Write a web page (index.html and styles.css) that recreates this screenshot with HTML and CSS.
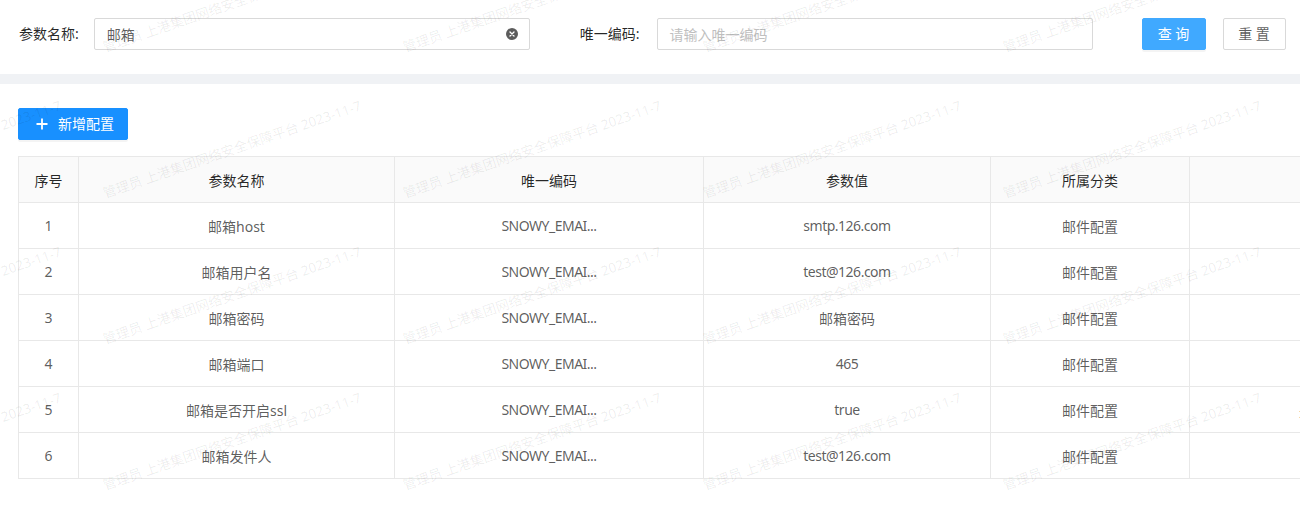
FILE: index.html
```html
<!DOCTYPE html>
<html lang="zh-CN">
<head>
<meta charset="utf-8">
<title>系统配置</title>
<link rel="stylesheet" href="styles.css">
</head>
<body>
<div class="page">
  <div class="search">
    <div class="field">
      <span class="label">参数名称:</span>
      <div class="input">
        <span class="value">邮箱</span>
        <svg class="clear" width="12" height="12" viewBox="0 0 12 12"><circle cx="6" cy="6" r="6" fill="#5c5c5c"/><path d="M4 4L8 8M8 4L4 8" stroke="#fff" stroke-width="1.3" stroke-linecap="round"/></svg>
      </div>
    </div>
    <div class="field field-2">
      <span class="label">唯一编码:</span>
      <div class="input">
        <span class="placeholder">请输入唯一编码</span>
      </div>
    </div>
    <div class="actions">
      <button class="btn btn-query">查 询</button>
      <button class="btn btn-reset">重 置</button>
    </div>
  </div>
  <div class="divider"></div>
  <div class="card">
    <button class="btn btn-add"><svg class="plus" width="12" height="12" viewBox="0 0 12 12"><path d="M6 0.5V11.5M0.5 6H11.5" stroke="#fff" stroke-width="1.8"/></svg><span>新增配置</span></button>
    <div class="table-wrap">
      <table class="grid">
        <colgroup>
          <col class="c1"><col class="c2"><col class="c3"><col class="c4"><col class="c5"><col class="c6"><col class="c7">
        </colgroup>
        <thead>
          <tr><th>序号</th><th>参数名称</th><th>唯一编码</th><th>参数值</th><th>所属分类</th><th>备注</th><th>操作</th></tr>
        </thead>
        <tbody>
          <tr><td>1</td><td>邮箱host</td><td class="latin">SNOWY_EMAI...</td><td class="latin">smtp.126.com</td><td>邮件配置</td><td></td><td>编辑</td></tr>
          <tr><td>2</td><td>邮箱用户名</td><td class="latin">SNOWY_EMAI...</td><td class="latin">test@126.com</td><td>邮件配置</td><td></td><td>编辑</td></tr>
          <tr><td>3</td><td>邮箱密码</td><td class="latin">SNOWY_EMAI...</td><td>邮箱密码</td><td>邮件配置</td><td></td><td>编辑</td></tr>
          <tr><td>4</td><td>邮箱端口</td><td class="latin">SNOWY_EMAI...</td><td class="latin">465</td><td>邮件配置</td><td></td><td>编辑</td></tr>
          <tr><td>5</td><td>邮箱是否开启ssl</td><td class="latin">SNOWY_EMAI...</td><td class="latin">true</td><td>邮件配置</td><td>是否开启ssl</td><td>编辑</td></tr>
          <tr><td>6</td><td>邮箱发件人</td><td class="latin">SNOWY_EMAI...</td><td class="latin">test@126.com</td><td>邮件配置</td><td></td><td>编辑</td></tr>
        </tbody>
      </table>
    </div>
  </div>
  <div class="watermark" aria-hidden="true">
    <div class="wm-grid">
      <div class="wm-cell"><span>管理员 上港集团网络安全保障平台 2023-11-7</span></div>
      <div class="wm-cell"><span>管理员 上港集团网络安全保障平台 2023-11-7</span></div>
      <div class="wm-cell"><span>管理员 上港集团网络安全保障平台 2023-11-7</span></div>
      <div class="wm-cell"><span>管理员 上港集团网络安全保障平台 2023-11-7</span></div>
      <div class="wm-cell"><span>管理员 上港集团网络安全保障平台 2023-11-7</span></div>
      <div class="wm-cell"><span>管理员 上港集团网络安全保障平台 2023-11-7</span></div>
      <div class="wm-cell"><span>管理员 上港集团网络安全保障平台 2023-11-7</span></div>
      <div class="wm-cell"><span>管理员 上港集团网络安全保障平台 2023-11-7</span></div>
      <div class="wm-cell"><span>管理员 上港集团网络安全保障平台 2023-11-7</span></div>
      <div class="wm-cell"><span>管理员 上港集团网络安全保障平台 2023-11-7</span></div>
      <div class="wm-cell"><span>管理员 上港集团网络安全保障平台 2023-11-7</span></div>
      <div class="wm-cell"><span>管理员 上港集团网络安全保障平台 2023-11-7</span></div>
      <div class="wm-cell"><span>管理员 上港集团网络安全保障平台 2023-11-7</span></div>
      <div class="wm-cell"><span>管理员 上港集团网络安全保障平台 2023-11-7</span></div>
      <div class="wm-cell"><span>管理员 上港集团网络安全保障平台 2023-11-7</span></div>
      <div class="wm-cell"><span>管理员 上港集团网络安全保障平台 2023-11-7</span></div>
      <div class="wm-cell"><span>管理员 上港集团网络安全保障平台 2023-11-7</span></div>
      <div class="wm-cell"><span>管理员 上港集团网络安全保障平台 2023-11-7</span></div>
      <div class="wm-cell"><span>管理员 上港集团网络安全保障平台 2023-11-7</span></div>
      <div class="wm-cell"><span>管理员 上港集团网络安全保障平台 2023-11-7</span></div>
      <div class="wm-cell"><span>管理员 上港集团网络安全保障平台 2023-11-7</span></div>
      <div class="wm-cell"><span>管理员 上港集团网络安全保障平台 2023-11-7</span></div>
      <div class="wm-cell"><span>管理员 上港集团网络安全保障平台 2023-11-7</span></div>
      <div class="wm-cell"><span>管理员 上港集团网络安全保障平台 2023-11-7</span></div>
      <div class="wm-cell"><span>管理员 上港集团网络安全保障平台 2023-11-7</span></div>
      <div class="wm-cell"><span>管理员 上港集团网络安全保障平台 2023-11-7</span></div>
      <div class="wm-cell"><span>管理员 上港集团网络安全保障平台 2023-11-7</span></div>
      <div class="wm-cell"><span>管理员 上港集团网络安全保障平台 2023-11-7</span></div>
      <div class="wm-cell"><span>管理员 上港集团网络安全保障平台 2023-11-7</span></div>
      <div class="wm-cell"><span>管理员 上港集团网络安全保障平台 2023-11-7</span></div>
    </div>
  </div>
</div>
</body>
</html>
```
FILE: styles.css
```css
* { box-sizing: border-box; }
html, body {
  margin: 0;
  padding: 0;
  background: #fff;
  overflow: hidden;
}
body {
  font-family: "Noto Sans", "Noto Sans CJK SC", sans-serif;
  font-size: 14px;
  color: rgba(0, 0, 0, 0.65);
}
.page {
  position: relative;
  width: 1300px;
  height: 513px;
  overflow: hidden;
}
.search {
  display: flex;
  align-items: center;
  height: 74px;
  padding: 0 0 6px 19px;
}
.field {
  display: flex;
  align-items: center;
}
.field-2 { margin-left: 50px; }
.label {
  color: rgba(0, 0, 0, 0.85);
  margin-right: 15px;
  line-height: 22px;
}
.field-2 .label { margin-right: 17px; }
.input {
  width: 436px;
  height: 32px;
  border: 1px solid #d9d9d9;
  border-radius: 2px;
  display: flex;
  align-items: center;
  padding: 0 12px;
  justify-content: space-between;
}
.value { color: rgba(0, 0, 0, 0.65); }
.placeholder { color: #bfbfbf; }
.clear { margin-right: -1px; }
.actions {
  display: flex;
  margin-left: 49px;
  gap: 17px;
}
.btn {
  font-family: inherit;
  font-size: 14px;
  height: 32px;
  border-radius: 2px;
  padding: 0;
  border: 1px solid #d9d9d9;
  background: #fff;
  color: rgba(0, 0, 0, 0.65);
  line-height: 30px;
  white-space: nowrap;
  cursor: pointer;
}
.btn-query {
  width: 64px;
  background: #40a9ff;
  border-color: #40a9ff;
  color: #fff;
  box-shadow: 0 2px 0 rgba(0, 0, 0, 0.045);
}
.btn-reset { width: 63px; }
.divider {
  height: 10px;
  background: #f0f2f5;
}
.card {
  padding: 24px 0 0 18px;
}
.btn-add {
  display: flex;
  align-items: center;
  width: 110px;
  padding: 0 0 0 17px;
  background: #1890ff;
  border-color: #1890ff;
  color: #fff;
  box-shadow: 0 2px 0 rgba(0, 0, 0, 0.045);
}
.btn-add .plus { margin-right: 10px; }
.table-wrap {
  margin-top: 16px;
  width: 1500px;
}
.grid {
  border-collapse: collapse;
  table-layout: fixed;
  width: 1463px;
}
.c1 { width: 60px; }
.c2 { width: 316px; }
.c3 { width: 309px; }
.c4 { width: 287px; }
.c5 { width: 199px; }
.c6 { width: 292px; }
.c7 { width: 200px; }
.grid th, .grid td {
  border: 1px solid #e8e8e8;
  height: 46px;
  padding: 0 8px;
  text-align: center;
  white-space: nowrap;
  overflow: hidden;
  font-weight: normal;
}
.grid th {
  background: #fafafa;
  color: rgba(0, 0, 0, 0.85);
}
.grid td {
  color: rgba(0, 0, 0, 0.65);
}
.grid td.latin {
  letter-spacing: -0.5px;
}
.watermark {
  position: absolute;
  inset: 0;
  pointer-events: none;
  overflow: hidden;
  z-index: 5;
}
.wm-grid {
  position: absolute;
  left: -199px;
  top: -97px;
  width: 1800px;
  display: grid;
  grid-template-columns: repeat(6, 300px);
  grid-auto-rows: 146px;
}
.wm-cell {
  position: relative;
}
.wm-cell span {
  position: absolute;
  left: 0;
  top: 146px;
  transform-origin: 0 0;
  transform: translateY(-8px) rotate(-19deg);
  white-space: nowrap;
  font-size: 13.5px;
  line-height: 14px;
  color: rgba(0, 0, 0, 0.075);
}
```
